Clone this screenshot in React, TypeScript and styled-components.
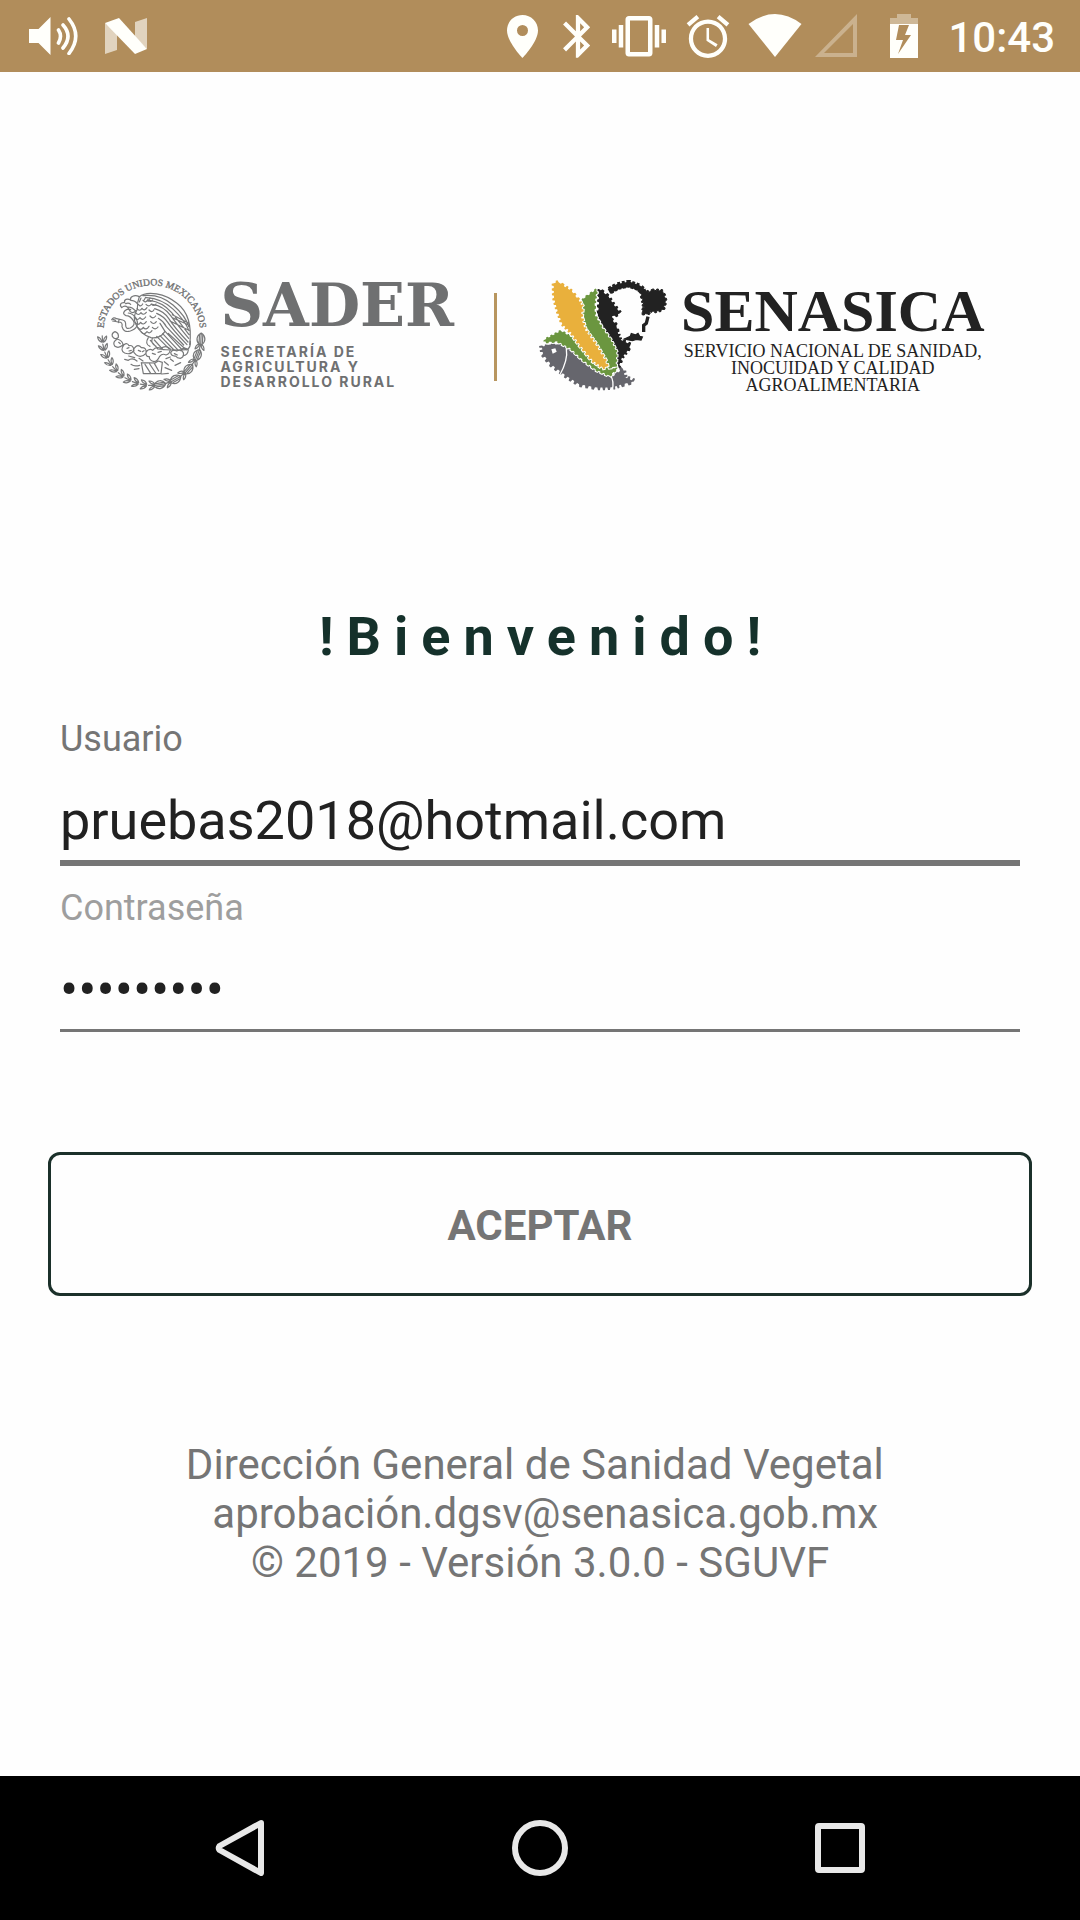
import React, { useState } from "react";
import styled, { createGlobalStyle } from "styled-components";

const GlobalStyle = createGlobalStyle`
  *, *::before, *::after { box-sizing: border-box; }
  body { margin: 0; background: #fefefe; font-family: Roboto, "Liberation Sans", sans-serif; }
`;

const Screen = styled.div`
  display: grid;
  grid-template-rows: auto 1fr auto;
  min-height: 100vh;
`;

const StatusBar = styled.header`
  display: flex;
  align-items: center;
  justify-content: space-between;
  height: 72px;
  padding: 0 25px 0 29px;
  background: #b18d5b;
  color: #fffffb;
`;

const StatusGroup = styled.div<{ $gap: number }>`
  display: flex;
  align-items: center;
  gap: ${(p) => p.$gap}px;
`;

const Glyph = styled.svg`
  display: block;
  flex: none;
  fill: currentColor;
`;

const Clock = styled.time`
  padding-top: 3px;
  font-size: 42px;
  line-height: 50px;
  font-weight: 500;
`;

const Main = styled.main`
  display: flex;
  flex-direction: column;
  padding: 198px 48px 60px;
`;

const Brands = styled.div`
  display: flex;
  align-items: center;
  justify-content: center;
  padding-right: 5px;
`;

const Brand = styled.div<{ $gap: number; $drop?: number }>`
  display: flex;
  align-items: center;
  gap: ${(p) => p.$gap}px;
  padding-top: ${(p) => p.$drop || 0}px;
`;

const BrandRule = styled.div`
  width: 3px;
  height: 88px;
  margin: 8px 42px 0 40px;
  background: #b8965f;
`;

const BrandText = styled.div<{ $align: string }>`
  text-align: ${(p) => p.$align};
`;

const SaderName = styled.div`
  color: #6f7071;
  font: 700 59px/60px "DejaVu Serif", "Liberation Serif", serif;
`;

const SaderCaption = styled.div`
  margin-top: 8px;
  color: #6f7071;
  font: 700 14px/15px Inter, "Open Sans", sans-serif;
  letter-spacing: 2px;
`;

const SenasicaName = styled.div`
  color: #222;
  font: 700 60px/64px "Liberation Serif", serif;
`;

const SenasicaCaption = styled.div`
  color: #222;
  font: 400 18px/17px "Liberation Serif", serif;
`;

const Title = styled.h1`
  margin: 210px 0 49px;
  padding-left: 13px;
  color: #15312b;
  font-size: 54px;
  line-height: 64px;
  font-weight: 700;
  letter-spacing: 13px;
  text-align: center;
`;

const Form = styled.form`
  display: flex;
  flex-direction: column;
`;

const Field = styled.div`
  display: flex;
  flex-direction: column;
  gap: 28px;
  margin-bottom: 21px;
  padding: 0 12px;
`;

const Label = styled.label<{ $muted?: boolean }>`
  color: ${(p) => (p.$muted ? "#9e9e9e" : "#757575")};
  font-size: 36px;
  line-height: 42px;
`;

const Input = styled.input<{ $rule: number }>`
  width: 100%;
  height: ${(p) => 72 + p.$rule}px;
  padding: 0 0 8px;
  border: 0;
  border-bottom: ${(p) => p.$rule}px solid #757575;
  border-radius: 0;
  outline: none;
  background: transparent;
  color: #212121;
  font-family: inherit;
  font-size: 54px;
  line-height: 64px;
`;

const Submit = styled.button`
  height: 144px;
  margin-top: 99px;
  padding-top: 4px;
  border: 3px solid #1b302a;
  border-radius: 12px;
  background: #fefefe;
  color: #757575;
  font-family: inherit;
  font-size: 42px;
  line-height: 49px;
  font-weight: 700;
  cursor: pointer;
`;

const Footer = styled.footer`
  margin-top: 144px;
  color: #757575;
  font-size: 42px;
  line-height: 49px;
  text-align: center;
`;

const FooterLine = styled.div`
  white-space: pre;
`;

const MailLink = styled.a`
  color: inherit;
  text-decoration: none;
`;

const NavBar = styled.nav`
  display: grid;
  grid-template-columns: repeat(3, 1fr);
  height: 144px;
  padding: 0 90px;
  background: #000;
`;

const NavButton = styled.button`
  display: grid;
  place-items: center;
  padding: 0;
  border: 0;
  background: none;
  color: #e8e8e8;
`;

const NavIcon = styled.svg`
  width: 56px;
  height: 56px;
  fill: none;
  stroke: currentColor;
  stroke-width: 6;
  stroke-linejoin: round;
`;

type Point = [number, number];

/** Closed outline whose edges are cut into small square teeth. */
function serrate(points: Point[], tooth: number, depth: number): string {
  const out: string[] = [];
  points.forEach(([x1, y1], i) => {
    const [x2, y2] = points[(i + 1) % points.length];
    const length = Math.hypot(x2 - x1, y2 - y1);
    const steps = Math.max(1, Math.round(length / tooth));
    const nx = (y2 - y1) / length;
    const ny = -(x2 - x1) / length;
    for (let s = 0; s < steps; s++) {
      [0, 0.5].forEach((half) => {
        const d = half ? depth : 0;
        [0.06, 0.44].forEach((edge) => {
          const t = (s + half + edge) / steps;
          out.push(`${(x1 + (x2 - x1) * t + nx * d).toFixed(1)} ${(y1 + (y2 - y1) * t + ny * d).toFixed(1)}`);
        });
      });
    }
  });
  return `M${out.join("L")}Z`;
}

const cornCob: Point[] = [[98, 66], [112, 62], [128, 74], [152, 90], [173, 117], [183, 136], [180, 166], [191, 205], [222, 248], [253, 300], [257, 316], [245, 318], [215, 297], [177, 250], [152, 215], [124, 188], [110, 150], [99, 110]];
const rightHusk: Point[] = [[227, 84], [221, 125], [221, 160], [241, 197], [269, 237], [286, 272], [284, 316], [262, 318], [234, 262], [200, 213], [186, 183], [188, 150], [181, 125], [188, 112]];
const leftHusk: Point[] = [[70, 236], [120, 209], [158, 232], [200, 268], [235, 305], [262, 322], [290, 320], [266, 343], [225, 325], [185, 295], [150, 262], [110, 240], [74, 242]];
const fish: Point[] = [[62, 252], [78, 260], [80, 250], [122, 249], [148, 268], [190, 304], [240, 333], [275, 346], [306, 322], [312, 348], [340, 360], [300, 370], [275, 378], [230, 379], [175, 369], [132, 341], [88, 307], [66, 278]];
const cowNeck: Point[] = [[233, 82], [262, 105], [278, 130], [298, 155], [282, 163], [264, 165], [286, 192], [290, 213], [298, 235], [329, 250], [320, 268], [303, 288], [292, 320], [289, 300], [282, 265], [264, 230], [243, 190], [230, 165], [234, 130]];
const cowEar: Point[] = [[360, 88], [382, 93], [400, 87], [425, 90], [433, 118], [426, 144], [400, 150], [388, 147], [380, 158], [363, 155], [370, 140], [366, 118]];

function SenasicaMark() {
  return (
    <svg width="130" height="113" viewBox="54 56 390 339" role="img" aria-label="Senasica">
      <path d={serrate(fish, 17, 8)} fill="#66666d" />
      <path d="M91 264l12-3 4 10-12 6z" fill="#fefefe" />
      <path d="M136 262q6 34-21 82M268 342q12 16 6 46" fill="none" stroke="#fefefe" strokeWidth="4" />
      <path d={serrate(cowNeck, 15, 6)} fill="#222" />
      <g stroke="#fefefe" strokeWidth="6" paintOrder="stroke">
        <path d={serrate(leftHusk, 15, 4)} fill="#6b963f" />
        <path d={serrate(rightHusk, 15, 4)} fill="#6b963f" />
        <path d={serrate(cornCob, 14, 6)} fill="#e9b03c" />
      </g>
      <path d={serrate(cowEar, 13, 5)} fill="#222" stroke="#222" strokeWidth="3" />
      <g fill="none" stroke="#222">
        <path d="M264 90L289 76 324 69 352 79 372 94" strokeWidth="16" />
        <path d="M266 88L290 74 324 67 354 78 368 91" strokeWidth="23" strokeDasharray="9 5" />
        <path d="M381 166L376 186 368 192 368 212" strokeWidth="10" />
        <path d="M310 233l18-8 3-8 12 4 8-5 5 9 8 2-4 9-14-2-12 4z" fill="#222" strokeWidth="4" />
      </g>
    </svg>
  );
}

const leaves = Array.from({ length: 19 }, (_, i) => {
  const angle = ((177 - i * 9.700) * Math.PI) / 180;
  return {
    x: 182 + Math.cos(angle) * 148,
    y: 200 + Math.sin(angle) * 146,
    turn: 90 + (angle * 180) / Math.PI,
    right: i > 9,
  };
});

function Emblem() {
  return (
    <svg width="120" height="125" viewBox="0 0 360 375" role="img" aria-label="Estados Unidos Mexicanos">
      <path id="motto-arc" d="M37 186A145 140 0 0 1 327 186" fill="none" />
      <text fill="#6f7071" stroke="#6f7071" strokeWidth="1" fontFamily="Liberation Serif, serif" fontSize="29">
        <textPath href="#motto-arc" startOffset="50%" textAnchor="middle">ESTADOS UNIDOS MEXICANOS</textPath>
      </text>
      <g fill="none" stroke="#777879" strokeWidth="3.6" strokeLinecap="round" strokeLinejoin="round">
        {leaves.map((leaf, i) => (
          <g key={i} transform={`translate(${leaf.x} ${leaf.y}) rotate(${leaf.turn})`}>
            {leaf.right && i % 2 === 0 ? (
              <path d="M-17 0C-8-15 8-15 17-4M17 4C8 15-8 15-17 0M-11-5H12M-13 0H16M-11 5H12" />
            ) : (
              <path d="M-9-2Q-4-13 8-14 5-4-9-2ZM-9 3Q-3 14 9 13 4 3-9 3ZM-8 0H10" />
            )}
          </g>
        ))}
        {/* head and beak */}
        <path d="M92 113C84 104 90 96 101 98 98 88 109 84 119 90 116 80 130 73 145 80M92 113Q101 105 110 112L118 125Q126 132 135 122M104 101Q113 97 119 103M119 91Q132 91 139 101M112 111Q125 112 132 121" />
        {/* raised wing */}
        <path d="M145 80C168 61 222 70 258 100 292 126 303 168 296 224M145 80Q138 96 139 118 125 137 133 160 148 194 180 203 207 207 222 184M156 77Q207 71 246 105T293 170M166 83Q213 86 247 118T294 182M175 91Q215 96 242 128T294 194M184 103Q218 108 239 137T293 205M191 116Q220 124 235 148T291 216M197 130Q219 139 231 158T288 224M202 145Q218 154 226 170L278 225M207 160L222 184M244 134L292 159M246 144L293 165M237 153L292 180" />
        {/* breast plumage */}
        <path d="M142 103q7 10 13-1m-17 14q8 10 15-1q7 10 15-2m-34 15q8 11 16 0q7 10 16-1m-36 16q9 11 17 0q8 11 17-2m-32 16q9 12 17 0q8 11 17-2m-26 17q9 12 17 0q8 11 17-3m-23 17q8 11 17-1q8 8 15-3M156 91q8 10 14-2q8 10 15 1M165 103q9 10 16-1q8 9 14 0M174 120q9 10 15-1M177 138q9 11 17 0M179 155q9 11 17 0M184 172q9 10 17-1M150 84l-5 12M164 82l-5 9M177 84l-6 10" />
        {/* tail and legs */}
        <path d="M197 199L233 235M207 197L249 240M215 191L262 241M223 185L274 240M232 190L286 240M172 203Q160 222 177 229M184 205Q178 220 195 229M178 211l22 25M190 210l26 29M200 237q38 5 88 2 12-7 10-26" />
        {/* serpent */}
        <path d="M62 149q5-9 15-3l18 4q10 2 9 16 0 13 14 8 17-10 9-22-9-15-22-15-12-5-4-14 8-8 18-4M65 153l17 3q14-1 11 14 5 19 25 13 30-10 18-37-10-16-24-17M64 147l10 4M84 150l-2 8" />
        {/* prickly pears and lake */}
        <path d="M72 185q12 4 10 17-10 9-18-3-3-9 8-14M79 207q-16 9-8 21 11 9 25-3 0-12-17-18M99 224q-13 18 2 25 18 7 28-8-2-17-15-14-5-10-15-3M134 230q-15 12 2 25 15 10 29-5 3-18-14-17-8-10-17-3M165 246q10-12 20-5 9-12 25-6 15-11 28 2-1 15-13 18-11-6-19 4-7 16-17 16-15-4-14-15-12 1-10-14M239 248q6-12 18-5 13-7 20 5 3 14-9 17-10 0-14-7-13 1-15-10M269 242q10-14 23-2-2 16-16 17M83 217l5 4M108 235l6-2M114 243l7-2M142 241l7 3M154 245l5-3M184 250l9 3M201 247l10-3M250 251l9 4M113 258l18 5M101 268l11 3q12-10 26 2M120 283q10 8 26 3M151 278l6 33h53l4-34-12-4-10 6-41-1M162 283l17 27M176 282l18 27M190 280l13 23M220 275l12 10M238 267l9 7M222 293l20 8M252 286l17-8M130 298l14-2M144 265l12 8M225 266l13-5M212 312l20-2" />
      </g>
    </svg>
  );
}

function SoundIcon() {
  return (
    <Glyph width="49" height="38" viewBox="0 0 49 38" aria-hidden="true">
      <path d="M0 12H9.500L21.500 0V38L9.500 26H0Z" />
      <g fill="none" stroke="currentColor" strokeWidth="3.600" strokeLinecap="round">
        <path d="M29.500 13Q33.500 19 29.500 26M34 8Q44 19 34 31M40 2Q53.500 19 40 36.500" />
      </g>
    </Glyph>
  );
}

function NougatIcon() {
  return (
    <Glyph width="42" height="36" viewBox="0 0 42 36" aria-hidden="true">
      <path d="M0 5V36L12 32V15ZM30 4L42 0V31L30 19Z" opacity=".62" />
      <path d="M0 5L14 0 42 31 30 36Z" />
    </Glyph>
  );
}

function StatusIcons() {
  return (
    <>
      <Glyph width="43" height="44" viewBox="0 0 43 44" aria-hidden="true">
        <path fillRule="evenodd" d="M21.500 1C13 1 6 7.500 6 16.500 6 28 21.500 44 21.500 44S37 28 37 16.500C37 7.500 30 1 21.500 1ZM21.500 11a5.500 5.500 0 1 1 0 11 5.500 5.500 0 0 1 0-11Z" />
      </Glyph>
      <Glyph width="41" height="44" viewBox="1.7 1.5 19.2 20.6" aria-hidden="true">
        <path d="M17.710 7.710L12 2h-1v7.590L6.410 5 5 6.410 10.590 12 5 17.590 6.410 19 11 14.410V22h1l5.710-5.710-4.300-4.290 4.300-4.290zM13 5.830l1.880 1.880L13 9.590V5.830zm1.880 10.460L13 18.170v-3.760l1.880 1.880z" />
      </Glyph>
      <Glyph width="60" height="44" viewBox="-1.33 2.1 26.67 19.56" aria-hidden="true">
        <path d="M0 15h2V9H0v6zm3 2h2V7H3v10zm19-8v6h2V9h-2zm-3 8h2V7h-2v10zM16.500 3h-9C6.670 3 6 3.670 6 4.500v15c0 .83.67 1.500 1.500 1.500h9c.83 0 1.500-.67 1.500-1.500v-15c0-.83-.67-1.500-1.500-1.500zM16 19H8V5h8v14z" />
      </Glyph>
      <Glyph width="54" height="44" viewBox="-0.67 1.4 25.35 20.65" aria-hidden="true">
        <path d="M22 5.720l-4.600-3.860-1.290 1.530 4.600 3.860L22 5.720zM7.880 3.390L6.600 1.860 2 5.710l1.290 1.530 4.590-3.850zM12.500 8H11.300v6l4.450 2.850.75-1.230-4-2.370V8zM12 4c-4.970 0-9 4.030-9 9s4.020 9 9 9c4.970 0 9-4.030 9-9s-4.030-9-9-9zm0 16c-3.870 0-7-3.130-7-7s3.130-7 7-7 7 3.130 7 7-3.130 7-7 7z" />
      </Glyph>
      <Glyph width="56" height="44" viewBox="0 0 56 44" aria-hidden="true">
        <path d="M28 43L1.500 10Q28-10 54.500 10Z" />
      </Glyph>
      <Glyph width="42" height="44" viewBox="0 0 42 44" aria-hidden="true">
        <path fillRule="evenodd" opacity=".32" d="M0 43H42V0ZM9 39H38V10Z" />
      </Glyph>
      <Glyph width="67" height="44" viewBox="0 0 67 44" aria-hidden="true">
        <path d="M28 0H42V4H49V10H21V4H28Z" opacity=".38" />
        <path fillRule="evenodd" d="M21 10H49V44H21ZM30 11L27 26H34L29 40 42 21H36L40 11Z" />
      </Glyph>
    </>
  );
}

export default function App() {
  const [user, setUser] = useState("pruebas2018@hotmail.com");
  const [password, setPassword] = useState("sanidad19");

  return (
    <Screen>
      <GlobalStyle />
      <StatusBar>
        <StatusGroup $gap={27}>
          <SoundIcon />
          <NougatIcon />
        </StatusGroup>
        <StatusGroup $gap={12}>
          <StatusIcons />
          <Clock>10:43</Clock>
        </StatusGroup>
      </StatusBar>

      <Main>
        <Brands>
          <Brand $gap={10}>
            <Emblem />
            <BrandText $align="left">
              <SaderName>SADER</SaderName>
              <SaderCaption>
                SECRETARÍA DE<br />AGRICULTURA Y<br />DESARROLLO RURAL
              </SaderCaption>
            </BrandText>
          </Brand>
          <BrandRule />
          <Brand $gap={12} $drop={8}>
            <SenasicaMark />
            <BrandText $align="center">
              <SenasicaName>SENASICA</SenasicaName>
              <SenasicaCaption>
                SERVICIO NACIONAL DE SANIDAD,<br />INOCUIDAD Y CALIDAD<br />AGROALIMENTARIA
              </SenasicaCaption>
            </BrandText>
          </Brand>
        </Brands>

        <Title>!Bienvenido!</Title>

        <Form onSubmit={(e) => e.preventDefault()}>
          <Field>
            <Label htmlFor="user">Usuario</Label>
            <Input id="user" type="text" $rule={6} spellCheck={false} value={user} onChange={(e) => setUser(e.target.value)} />
          </Field>
          <Field>
            <Label htmlFor="password" $muted>Contraseña</Label>
            <Input id="password" type="password" $rule={3} value={password} onChange={(e) => setPassword(e.target.value)} />
          </Field>
          <Submit type="submit">ACEPTAR</Submit>
        </Form>

        <Footer>
          <FooterLine>{"Dirección General de Sanidad Vegetal "}</FooterLine>
          <FooterLine>
            {" "}
            <MailLink href="mailto:aprobación.dgsv@senasica.gob.mx">aprobación.dgsv@senasica.gob.mx</MailLink>
          </FooterLine>
          <FooterLine>© 2019 - Versión 3.0.0 - SGUVF</FooterLine>
        </Footer>
      </Main>

      <NavBar>
        <NavButton type="button" aria-label="Atrás">
          <NavIcon viewBox="0 0 56 56"><path d="M7.500 26Q6 28 7.500 30L49 53V3Z" /></NavIcon>
        </NavButton>
        <NavButton type="button" aria-label="Inicio">
          <NavIcon viewBox="0 0 56 56"><circle cx="28" cy="28" r="25" /></NavIcon>
        </NavButton>
        <NavButton type="button" aria-label="Recientes">
          <NavIcon viewBox="0 0 56 56"><rect x="6" y="6" width="44" height="44" rx="1" /></NavIcon>
        </NavButton>
      </NavBar>
    </Screen>
  );
}
